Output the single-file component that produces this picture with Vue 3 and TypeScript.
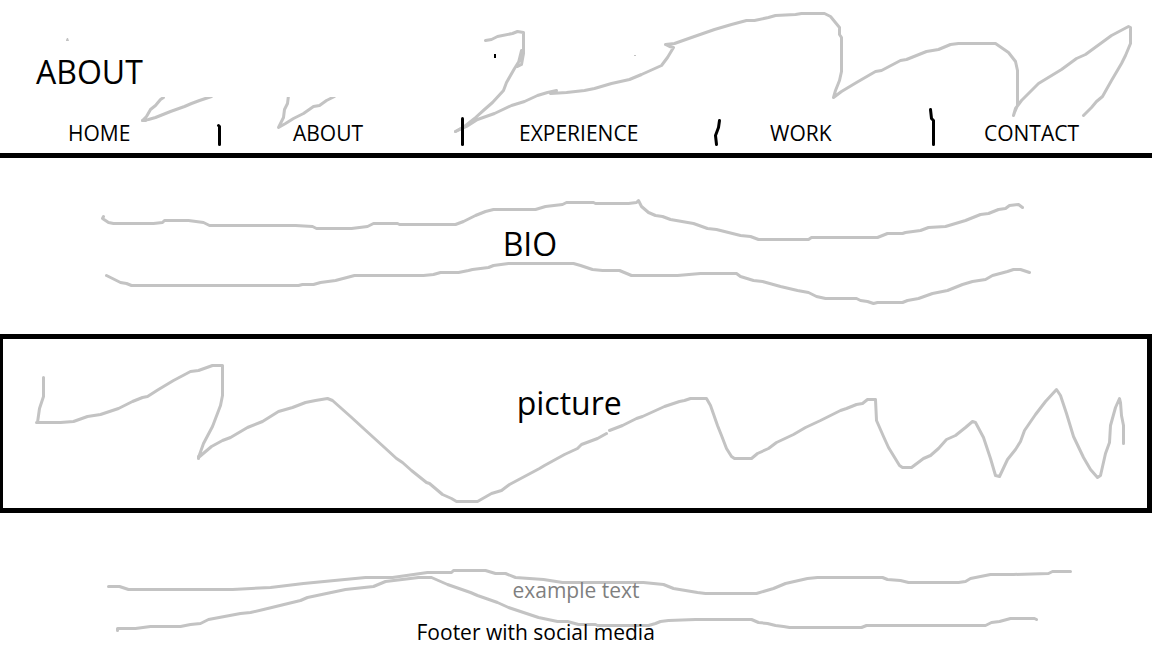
<script setup lang="ts">
interface NavItem {
  label: string
  href: string
}

const navItems: NavItem[] = [
  { label: 'HOME', href: '#home' },
  { label: 'ABOUT', href: '#about' },
  { label: 'EXPERIENCE', href: '#experience' },
  { label: 'WORK', href: '#work' },
  { label: 'CONTACT', href: '#contact' },
]

const headerStrokes: string[] = [
  'M163 97L160 99L155 105L150 109L146 116L142 120L148 119L155 117L170 111L184 106L191 103L199 100L211 96',
  'M288 95L287 103L284 109L283 117L281 121L278 127L285 123L293 118L303 113L313 106L319 105L326 100L334 96',
  'M485 40L491 39L497 36L512 33L517 31L523 32V53L521 64L517 66L521 50L519 60L514 68L506 82L503 90L492 102L484 109L474 118L464 126L455 131L466 126L477 119L494 113L511 105L524 101L537 95L547 92L556 90L550 93L566 92L584 90L594 88L611 83L629 79L641 74L661 65L667 57L673 47L669 46L665 44L674 43L691 37L714 29L731 24L746 20L754 20L768 17L775 15L795 14L801 13H824L830 16L839 27L839 34L841 37V71L839 80L835 90L833 97L841 91L856 82L875 71L881 70L900 60L906 59L926 51L938 49L950 44L958 43H995L1008 52L1015 61L1017 70V105L1014 112L1013 115L1015 108L1021 100L1038 83L1061 69L1076 58L1085 54L1111 35L1128 26L1130 27V43L1125 55L1121 63L1111 80L1102 96L1096 101L1091 107L1083 115',
  'M142 120H145',
  'M455 131L466 125',
]

const dividerStrokes: string[] = [
  'M218 125L219 126V144',
  'M462 118V144',
  'M719 120L718 127L715 135L716 144',
  'M930 109L931 118L933 120V144',
]

const bioStrokes: string[] = [
  'M103 216L102 218L108 222L113 223H153L162 222L164 220H188L203 222L209 225H295L312 226L316 228H351L367 226L373 223H397L399 224H455L463 221L475 215L485 211L493 209H535L545 206L562 204L566 202H593L595 203H628L636 202L638 200L641 206L648 212L655 215L662 216L670 219L693 223L707 228L716 229L740 235L750 236L758 239H808L811 237H877L887 233H902L905 232L920 230L928 227L945 226L965 220L980 214L988 213L998 209L1005 208L1009 205L1018 204L1022 207',
  'M106 275L108 276L120 282L126 283L131 285H298L302 284L313 284L320 282L335 280L354 275H423L433 274L440 272H458L468 270L472 269L488 267L493 265L508 263H573L580 265L592 269L602 270H619L631 275H677L700 273H736L740 276L753 280L762 281L780 286L797 290L808 292L816 296L825 298H856L860 300L867 301L873 303L877 302H902L907 300L918 298L932 293L947 290L962 284L972 281L985 279L992 275L1007 271L1013 269H1020L1026 271L1029 272',
]

const pictureStrokes: string[] = [
  'M43 377V396L39 408L37 422H36H60L73 421L87 416L100 414L118 408L132 401L142 397L147 396L158 389L168 383L173 380L190 371L198 370L212 365H222V395L220 405L212 426L203 443L198 457L211 446L222 440L230 437L247 427L262 421L278 411L292 407L305 402L315 400L327 398L332 400L350 416L362 427L384 447L396 458L402 462L411 470L426 482L429 483L442 494L451 498L456 501H477L491 493L501 490L509 484L524 476L539 468L544 465L564 454L577 448L581 444L597 438L606 433',
  'M609 430L622 425L636 418L642 416L664 406L679 401L684 400L690 398H706L710 405L717 425L721 435L726 448L731 456L734 458H751L757 453L768 448L776 442L793 434L805 427L820 420L840 410L846 408L856 404L862 403L867 399H875L876 420L883 436L888 447L899 465L902 467H911L923 458L930 455L938 448L946 439L955 435L965 427L972 421L975 422L983 437L987 449L990 458L995 475L999 476L1007 459L1015 449L1020 441L1024 430L1035 414L1045 401L1056 389L1060 395L1066 413L1073 436L1083 457L1090 469L1097 477L1100 475L1105 453L1109 442L1110 425L1115 407L1119 398L1120 402L1121 415L1123 425V443',
  'M198 456V458',
]

const footerStrokes: string[] = [
  'M108 586H119L128 589H232L270 587L303 583L365 577H392L427 572H451L453 570H485L495 573L505 573L515 577L543 579L562 582H643L663 584L673 588L697 592L705 593H756L773 588L785 583L807 578L817 577H882L887 579L900 580L908 582H958L965 581L970 578L990 574L1013 574L1048 573L1052 571H1070',
  'M117 630V628H135L150 626H180L190 624L200 623L208 619L240 613L250 612L263 609L300 600L307 597L345 589L373 586L385 581L410 578L418 577H431L447 584L470 592L477 595L497 602L508 607L538 617L557 621L567 621L578 624H595L597 625H648L655 623L660 621L668 620L695 619H751L758 622L767 623L775 625L783 626L789 627H861L866 625H985L991 622L999 621L1010 618H1034L1036 619',
]
</script>

<template>
  <div class="page">
    <header class="header">
      <svg class="sketch" viewBox="0 0 1152 153" preserveAspectRatio="none" aria-hidden="true">
        <g transform="translate(0.5 0.5)">
          <path v-for="d in headerStrokes" :key="d" class="pencil" :d="d" />
        </g>
        <rect class="eraser" x="130" y="90" width="220" height="7" />
        <path class="crumb" d="M66 41V40L67 38H68L69 41Z" />
        <path class="crumb" d="M634 55H636V56H634Z" />
        <path class="speck" d="M494 54H496V58H494Z" />
        <g transform="translate(0.5 0.5)">
          <path v-for="d in dividerStrokes" :key="d" class="marker" :d="d" />
        </g>
      </svg>
      <h1 class="title">ABOUT</h1>
      <nav class="nav">
        <a v-for="item in navItems" :key="item.label" :href="item.href">{{ item.label }}</a>
      </nav>
    </header>

    <main>
      <section class="bio">
        <svg class="sketch" viewBox="0 158 1152 176" preserveAspectRatio="none" aria-hidden="true">
          <g transform="translate(0.5 0.5)">
            <path v-for="d in bioStrokes" :key="d" class="pencil" :d="d" />
          </g>
        </svg>
        <h2 class="heading">BIO</h2>
      </section>

      <section class="picture">
        <svg class="sketch" viewBox="3 339 1144 169" preserveAspectRatio="none" aria-hidden="true">
          <g transform="translate(0.5 0.5)">
            <path v-for="d in pictureStrokes" :key="d" class="pencil" :d="d" />
          </g>
        </svg>
        <h2 class="heading">picture</h2>
      </section>
    </main>

    <footer class="footer">
      <svg class="sketch" viewBox="0 513 1152 135" preserveAspectRatio="none" aria-hidden="true">
        <g transform="translate(0.5 0.5)">
          <path v-for="d in footerStrokes" :key="d" class="pencil" :d="d" />
        </g>
      </svg>
      <p class="example">example text</p>
      <p class="social">Footer with social media</p>
    </footer>
  </div>
</template>

<style>
body {
  margin: 0;
  background: #fff;
}
</style>

<style scoped>
.page {
  display: flex;
  flex-direction: column;
  min-height: 100vh;
  background: #fff;
  color: #000;
  font-family: "Open Sans", "Noto Sans", sans-serif;
  font-size: 21px;
  line-height: 24px;
}

.header,
.bio,
.picture,
.footer {
  position: relative;
}

.sketch {
  position: absolute;
  inset: 0;
  width: 100%;
  height: 100%;
  pointer-events: none;
}

.pencil,
.marker {
  fill: none;
  stroke: #c3c3c3;
  stroke-width: 3px;
  stroke-linecap: round;
  stroke-linejoin: round;
  vector-effect: non-scaling-stroke;
}

.marker {
  stroke: #000;
}

.eraser {
  fill: #fff;
}

.crumb {
  fill: #c3c3c3;
}

.speck {
  fill: #000;
}

.title,
.heading,
.example,
.social {
  position: relative;
  margin: 0;
}

.title,
.heading {
  font-size: 32px;
  font-weight: 400;
  line-height: 40px;
}

.header {
  padding: 52px 0 8px;
  border-bottom: 5px solid #000;
}

.title {
  padding-left: 36px;
}

.nav {
  position: relative;
  display: grid;
  grid-template-columns: 225fr 226fr 251fr 214fr 168fr;
  margin-top: 29px;
  padding-left: 68px;
}

.nav a {
  justify-self: start;
  color: inherit;
  text-decoration: none;
}

.bio,
.picture,
.footer {
  text-align: center;
}

.bio {
  padding: 66px 8% 70px 0;
}

.picture {
  padding: 44px 1% 85px 0;
  border: 5px solid #000;
  border-left-width: 3px;
}

.footer {
  flex: 1;
  padding: 65px 0 4px;
}

.example {
  color: #7f7f7f;
}

.social {
  margin-top: 18px;
  padding-right: 7%;
}
</style>
